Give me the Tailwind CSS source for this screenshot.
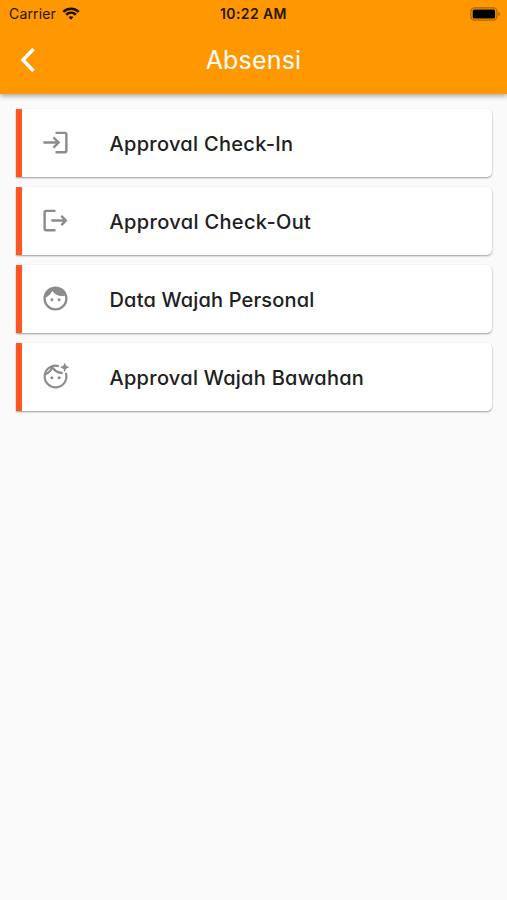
<!DOCTYPE html>
<html lang="id">
<head>
<meta charset="utf-8">
<title>Absensi</title>
<script src="https://cdn.jsdelivr.net/npm/@tailwindcss/browser@4"></script>
</head>
<body class="bg-[#fafafa] font-['Inter',sans-serif] w-[507px] h-[900px] overflow-hidden">
<header class="h-[94px] bg-[#ff9800] shadow-[0_2px_5px_rgba(0,0,0,0.35)] flex flex-col">
  <div class="h-[27px] grid grid-cols-3 items-center text-[14px] text-[#241500]">
    <div class="flex items-center pl-[9px] gap-[6px]">
      <span class="tracking-[0.15px]">Carrier</span>
      <svg class="w-[18px] h-[13px]" viewBox="0 0 19 14" fill="none" stroke="#1c1000" stroke-width="2.8"><path d="M1.2 5.2C6 .7 13 .7 17.8 5.2M4.3 8.3c3-2.8 7.4-2.8 10.4 0"/><path d="M9.5 13.6 6.8 10.9c1.5-1.4 3.9-1.4 5.4 0z" fill="#1c1000" stroke="none"/></svg>
    </div>
    <span class="text-center font-semibold whitespace-nowrap tracking-[0.4px]">10:22 AM</span>
    <div class="flex justify-end pr-[6px]">
      <svg class="w-[31px] h-[14px]" viewBox="0 0 31 14"><rect x=".9" y=".8" width="26" height="12.4" rx="3.6" fill="none" stroke="#a86400" stroke-width="1.2"/><rect x="2.7" y="2.5" width="22.4" height="9" rx="1.6" fill="#000"/><path d="M28.4 4.8c2.2.8 2.2 3.6 0 4.4z" fill="#a86400"/></svg>
    </div>
  </div>
  <div class="h-[66px] grid grid-cols-[60px_1fr_60px] items-center text-white">
    <svg class="w-[16px] h-[26px] ml-[20px]" viewBox="0 0 16 26" fill="none" stroke="currentColor" stroke-width="3.5"><path d="M13.5 2 2.9 13l10.6 11"/></svg>
    <h1 class="text-center text-[25px] leading-none tracking-[0.2px] pt-px [font-feature-settings:'cv11']">Absensi</h1>
  </div>
</header>
<main class="pt-[15px] pl-[16px] pr-[15px] flex flex-col gap-[10px] text-[20px] font-medium text-[#202020] [font-feature-settings:'cv11']">
  <div class="h-[68px] flex items-center bg-white border-l-6 border-[#ff5722] rounded-r-[5px] shadow-[0_1px_2px_rgba(0,0,0,0.38)]">
    <svg class="w-[29px] h-[29px] ml-[19px] mr-[39.5px] mb-px text-[#8c8c8c]" viewBox="0 0 24 24" fill="currentColor"><path d="M11 7 9.6 8.4l2.6 2.6H2v2h10.2l-2.6 2.6L11 17l5-5zm9 12h-8v2h8c1.1 0 2-.9 2-2V5c0-1.1-.9-2-2-2h-8v2h8z"/></svg>
    <span class="tracking-[0.3px] pt-px">Approval Check-In</span>
  </div>
  <div class="h-[68px] flex items-center bg-white border-l-6 border-[#ff5722] rounded-r-[5px] shadow-[0_1px_2px_rgba(0,0,0,0.38)]">
    <svg class="w-[29px] h-[29px] ml-[19px] mr-[39.5px] mb-px text-[#8c8c8c]" viewBox="0 0 24 24" fill="currentColor"><path d="m17.5 7.5-1.41 1.41L18.17 11H8.5v2h9.67l-2.08 2.09 1.41 1.41L22 12zM4 5h8V3H4c-1.1 0-2 .9-2 2v14c0 1.1.9 2 2 2h8v-2H4z"/></svg>
    <span class="tracking-[0.35px] pt-px">Approval Check-Out</span>
  </div>
  <div class="h-[68px] flex items-center bg-white border-l-6 border-[#ff5722] rounded-r-[5px] shadow-[0_1px_2px_rgba(0,0,0,0.38)]">
    <svg class="w-[29px] h-[29px] ml-[19px] mr-[39.5px] mb-px text-[#8c8c8c]" viewBox="0 0 24 24" fill="currentColor"><path d="M9 11.75c-.69 0-1.25.56-1.25 1.25s.56 1.25 1.25 1.25 1.25-.56 1.25-1.25-.56-1.25-1.25-1.25zm6 0c-.69 0-1.25.56-1.25 1.25s.56 1.25 1.25 1.25 1.25-.56 1.25-1.25-.56-1.25-1.25-1.25zM12 2C6.48 2 2 6.48 2 12s4.48 10 10 10 10-4.48 10-10S17.52 2 12 2zm0 18c-4.41 0-8-3.59-8-8 0-.29.02-.58.05-.86 2.36-1.05 4.23-2.98 5.21-5.37C11.07 8.33 14.05 10 17.42 10c.78 0 1.53-.09 2.25-.26.21.71.33 1.47.33 2.26 0 4.41-3.59 8-8 8z"/></svg>
    <span class="tracking-[0.17px] pt-px">Data Wajah Personal</span>
  </div>
  <div class="h-[68px] flex items-center bg-white border-l-6 border-[#ff5722] rounded-r-[5px] shadow-[0_1px_2px_rgba(0,0,0,0.38)]">
    <svg class="w-[29px] h-[29px] ml-[19px] mr-[39.5px] mb-px text-[#8c8c8c]" viewBox="0 0 24 24" fill="currentColor"><path d="M14.8 3.45A9 9 0 1 0 20.5 9M3.4 10.4C6.3 9.2 8.3 7.3 9.3 4.3M8.9 3.6C10.9 7.2 13.7 9.1 18 9" fill="none" stroke="currentColor" stroke-width="1.8"/><circle cx="9" cy="13" r="1.25"/><circle cx="15" cy="13" r="1.25"/><path d="M20.8 5.6 19.6 8.2l-1.2-2.6-2.6-1.2 2.6-1.2L19.6.6l1.2 2.6 2.6 1.2z"/></svg>
    <span class="tracking-[0.28px] pt-px">Approval Wajah Bawahan</span>
  </div>
</main>
</body>
</html>
